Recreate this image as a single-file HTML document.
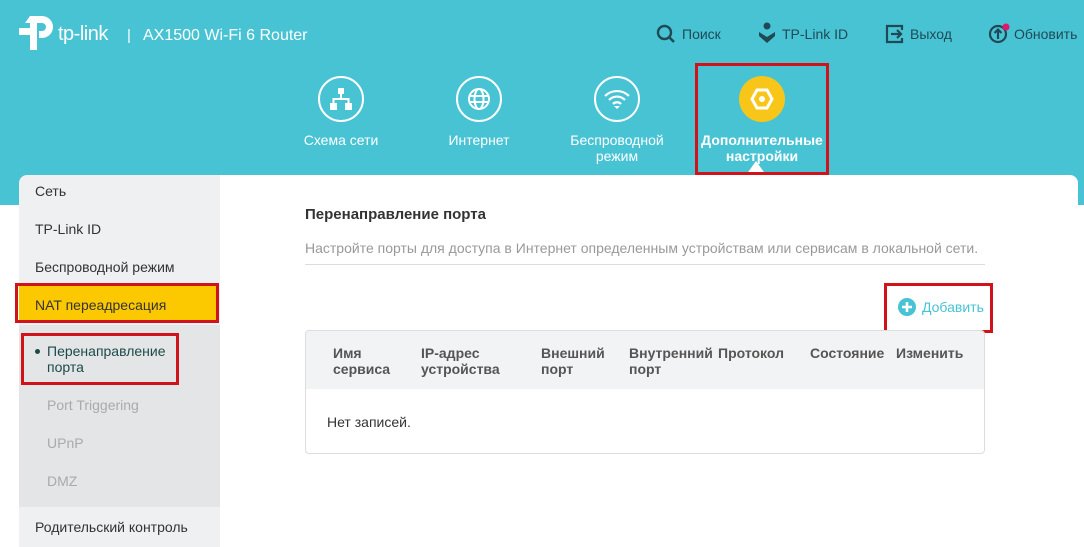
<!DOCTYPE html>
<html><head><meta charset="utf-8"><style>
*{margin:0;padding:0;box-sizing:border-box}
body{width:1084px;height:547px;overflow:hidden;background:#fff;font-family:"Liberation Sans",Arial,sans-serif;position:relative}
.hdr{position:absolute;left:0;top:0;width:1084px;height:205px;background:#48c3d4}
.abs{position:absolute}
.w{color:#fff}
.top{color:#1f4a55;font-size:14px}
.nav{position:absolute;width:130px;text-align:center;color:#fff;font-size:14px;line-height:16px}
.circ{width:46px;height:46px;border:2px solid #fff;border-radius:50%;margin:0 auto 10px;display:flex;align-items:center;justify-content:center}
.side{position:absolute;left:19px;top:175px;width:201px;height:372px;background:#eef0f1;border-top-left-radius:8px}
.si{position:absolute;left:16px;font-size:14px;color:#333}
.sub{position:absolute;left:0;top:150px;width:201px;height:182px;background:#e3e5e6}
.card{position:absolute;left:220px;top:175px;width:858px;height:372px;background:#fff;border-top-right-radius:8px}
.red{position:absolute;border:3px solid #d0121b}
</style></head><body>
<div class="hdr"></div>
<!-- logo -->
<svg class="abs" style="left:18px;top:14px" width="38" height="38" viewBox="0 0 38 38"><path d="M12 2h12a11 11 0 0 1 0 22h-3v-7h3a4 4 0 0 0 0-8h-5v27h-7V9h-5z" fill="#fff"/><rect x="1" y="14" width="12" height="7" rx="1" fill="#fff"/></svg>
<div class="abs w" style="left:58px;top:23px;font-size:20px;letter-spacing:-0.5px">tp-link</div>
<div class="abs w" style="left:127px;top:27px;font-size:15px">|</div>
<div class="abs w" style="left:143px;top:27px;font-size:16px">AX1500 Wi-Fi 6 Router</div>
<!-- top right -->
<svg class="abs" style="left:656px;top:24px" width="20" height="20" viewBox="0 0 20 20"><circle cx="8.5" cy="8.5" r="6.5" fill="none" stroke="#1f4a55" stroke-width="2.4"/><path d="M13 13l5 5" stroke="#1f4a55" stroke-width="2.6"/></svg>
<div class="abs top" style="left:682px;top:26px">Поиск</div>
<svg class="abs" style="left:758px;top:22px" width="18" height="22" viewBox="0 0 18 22"><circle cx="9" cy="4" r="3.5" fill="#1f4a55"/><path d="M1 10l8 5 8-5v4l-8 7-8-7z" fill="#1f4a55"/></svg>
<div class="abs top" style="left:782px;top:26px">TP-Link ID</div>
<svg class="abs" style="left:885px;top:24px" width="20" height="20" viewBox="0 0 20 20"><path d="M8 2H2v16h6M8 2h9v4M17 14v4H8" fill="none" stroke="#1f4a55" stroke-width="2.2"/><path d="M6 10h10M12 6l4 4-4 4" fill="none" stroke="#1f4a55" stroke-width="2.2"/></svg>
<div class="abs top" style="left:910px;top:26px">Выход</div>
<svg class="abs" style="left:988px;top:21px" width="24" height="24" viewBox="0 0 24 24"><circle cx="10" cy="13" r="8" fill="none" stroke="#1f4a55" stroke-width="2.2"/><path d="M10 18V9M6.5 12l3.5-3.5 3.5 3.5" fill="none" stroke="#1f4a55" stroke-width="2.2"/><circle cx="18" cy="6" r="3.5" fill="#e0186c"/></svg>
<div class="abs top" style="left:1014px;top:26px">Обновить</div>
<!-- nav -->
<div class="nav" style="left:276px;top:76px"><div class="circ"><svg width="26" height="24" viewBox="0 0 26 24"><rect x="10" y="1" width="6" height="6" fill="#fff"/><rect x="2" y="16" width="7" height="7" fill="#fff"/><rect x="17" y="16" width="7" height="7" fill="#fff"/><path d="M13 7v5M5.5 16v-4h15v4" fill="none" stroke="#fff" stroke-width="2"/></svg></div>Схема сети</div>
<div class="nav" style="left:414px;top:76px"><div class="circ"><svg width="26" height="26" viewBox="0 0 26 26"><circle cx="13" cy="13" r="10" fill="none" stroke="#fff" stroke-width="2"/><ellipse cx="13" cy="13" rx="4.5" ry="10" fill="none" stroke="#fff" stroke-width="2"/><path d="M3 10h20M3 16h20" stroke="#fff" stroke-width="2"/></svg></div>Интернет</div>
<div class="nav" style="left:552px;top:76px"><div class="circ"><svg width="28" height="24" viewBox="0 0 28 24"><path d="M2 9a17 17 0 0 1 24 0M6 13a11 11 0 0 1 16 0M10 17a5.5 5.5 0 0 1 8 0" fill="none" stroke="#fff" stroke-width="2.2"/><path d="M11 19l3 3 3-3z" fill="#fff"/></svg></div>Беспроводной<br>режим</div>
<div class="nav" style="left:697px;top:76px;font-weight:bold"><div class="circ" style="border:none;background:#f8c619;width:46px;height:46px"><svg width="24" height="24" viewBox="0 0 24 24"><path d="M7 3h10l5 9-5 9H7l-5-9z" fill="none" stroke="#fff" stroke-width="3"/><circle cx="12" cy="12" r="3" fill="#fff"/></svg></div>Дополнительные<br>настройки</div>
<div class="abs" style="left:746px;top:161px;width:0;height:0;border-left:10px solid transparent;border-right:10px solid transparent;border-bottom:14px solid #fff"></div>
<div class="red" style="left:695px;top:63px;width:134px;height:112px"></div>
<!-- sidebar -->
<div class="side">
<div class="sub"></div>
<div class="si" style="top:8px">Сеть</div>
<div class="si" style="top:46px">TP-Link ID</div>
<div class="si" style="top:84px">Беспроводной режим</div>
<div class="abs" style="left:0;top:110px;width:200px;height:36px;background:#fcc800"></div>
<div class="si" style="top:122px">NAT переадресация</div>
<div class="si" style="left:28px;top:168px;color:#1d4a4a;line-height:16px">Перенаправление<br>порта</div>
<div class="abs" style="left:16px;top:174px;width:5px;height:5px;border-radius:50%;background:#1d4a4a"></div>
<div class="si" style="left:28px;top:222px;color:#aaa">Port Triggering</div>
<div class="si" style="left:28px;top:260px;color:#aaa">UPnP</div>
<div class="si" style="left:28px;top:298px;color:#aaa">DMZ</div>
<div class="si" style="top:344px">Родительский контроль</div>
</div>
<div class="red" style="left:15px;top:283px;width:204px;height:40px"></div>
<div class="red" style="left:21px;top:333px;width:158px;height:52px"></div>
<!-- content -->
<div class="card"></div>
<div class="abs" style="left:305px;top:206px;font-size:15px;font-weight:bold;color:#333">Перенаправление порта</div>
<div class="abs" style="left:305px;top:240px;font-size:14px;color:#999">Настройте порты для доступа в Интернет определенным устройствам или сервисам в локальной сети.</div>
<div class="abs" style="left:305px;top:264px;width:680px;height:1px;background:#ddd"></div>
<svg class="abs" style="left:898px;top:298px" width="18" height="18" viewBox="0 0 18 18"><circle cx="9" cy="9" r="9" fill="#48c3d4"/><path d="M9 4v10M4 9h10" stroke="#fff" stroke-width="2.6"/></svg>
<div class="abs" style="left:922px;top:299px;font-size:14px;color:#48c3d4">Добавить</div>
<div class="red" style="left:884px;top:283px;width:109px;height:50px"></div>
<div class="abs" style="left:305px;top:330px;width:680px;height:124px;border:1px solid #ddd;border-radius:4px;overflow:hidden">
<div style="height:58px;background:#f2f3f4;position:relative;font-size:14px;font-weight:bold;color:#555;line-height:16px">
<div class="abs" style="left:27px;top:14px">Имя<br>сервиса</div>
<div class="abs" style="left:115px;top:14px">IP-адрес<br>устройства</div>
<div class="abs" style="left:235px;top:14px">Внешний<br>порт</div>
<div class="abs" style="left:323px;top:14px">Внутренний<br>порт</div>
<div class="abs" style="left:412px;top:14px">Протокол</div>
<div class="abs" style="left:504px;top:14px">Состояние</div>
<div class="abs" style="left:590px;top:14px">Изменить</div>
</div>
<div class="abs" style="left:21px;top:83px;font-size:14px;color:#333">Нет записей.</div>
</div>
</body></html>
